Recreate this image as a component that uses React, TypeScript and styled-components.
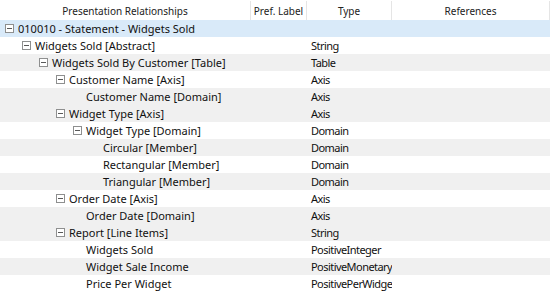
import React, { VFC } from 'react';
import styled, { createGlobalStyle } from 'styled-components';

type Row = {
  label: string,
  level: number,
  type: string,
  expandable: boolean,
  tone: 'selected' | 'white' | 'grey',
};

const rows: Row[] = [
  { label: '010010 - Statement - Widgets Sold', level: 0, type: '', expandable: true, tone: 'selected' },
  { label: 'Widgets Sold [Abstract]', level: 1, type: 'String', expandable: true, tone: 'white' },
  { label: 'Widgets Sold By Customer [Table]', level: 2, type: 'Table', expandable: true, tone: 'grey' },
  { label: 'Customer Name [Axis]', level: 3, type: 'Axis', expandable: true, tone: 'white' },
  { label: 'Customer Name [Domain]', level: 4, type: 'Axis', expandable: false, tone: 'grey' },
  { label: 'Widget Type [Axis]', level: 3, type: 'Axis', expandable: true, tone: 'grey' },
  { label: 'Widget Type [Domain]', level: 4, type: 'Domain', expandable: true, tone: 'white' },
  { label: 'Circular [Member]', level: 5, type: 'Domain', expandable: false, tone: 'grey' },
  { label: 'Rectangular [Member]', level: 5, type: 'Domain', expandable: false, tone: 'white' },
  { label: 'Triangular [Member]', level: 5, type: 'Domain', expandable: false, tone: 'grey' },
  { label: 'Order Date [Axis]', level: 3, type: 'Axis', expandable: true, tone: 'white' },
  { label: 'Order Date [Domain]', level: 4, type: 'Axis', expandable: false, tone: 'grey' },
  { label: 'Report [Line Items]', level: 3, type: 'String', expandable: true, tone: 'grey' },
  { label: 'Widgets Sold', level: 4, type: 'PositiveInteger', expandable: false, tone: 'white' },
  { label: 'Widget Sale Income', level: 4, type: 'PositiveMonetary', expandable: false, tone: 'grey' },
  { label: 'Price Per Widget', level: 4, type: 'PositivePerWidget', expandable: false, tone: 'white' },
];

const tones = {
  selected: '#d9eaf9',
  white: '#ffffff',
  grey: '#f0f0f0',
};

const GlobalStyle = createGlobalStyle`
  html, body {
    margin: 0;
    padding: 0;
    background: #ffffff;
  }
  body {
    font-family: "Noto Sans", "Open Sans", sans-serif;
    font-size: 11px;
    color: #111111;
  }
`

const Tree = styled.div`
  width: 552px;
  height: 291px;
  overflow: hidden;
`

const columns = '251px 56px 85px 158px';

const Header = styled.div`
  display: grid;
  grid-template-columns: ${columns};
  height: 20px;
  background: #ffffff;
  font-size: 10px;
`

const HeadCell = styled.div`
  display: flex;
  align-items: center;
  justify-content: center;
  border-right: 1px solid #e5e5e5;
  margin-top: 1px;
  color: #222222;
  white-space: nowrap;
  overflow: hidden;
`

const Line = styled.div<{ $tone: Row['tone'] }>`
  display: grid;
  grid-template-columns: ${columns};
  height: 17px;
  width: 550px;
  background: ${(p) => tones[p.$tone]};
`

const NameCell = styled.div<{ $level: number }>`
  display: flex;
  align-items: center;
  padding-left: ${(p) => 5 + p.$level * 17}px;
  white-space: nowrap;
  overflow: hidden;
`

const TypeCell = styled.div`
  display: flex;
  align-items: center;
  padding-left: 4px;
  letter-spacing: -0.55px;
  white-space: nowrap;
  overflow: hidden;
`

const Toggle = styled.span<{ $hidden: boolean }>`
  flex: none;
  display: block;
  width: 9px;
  height: 9px;
  margin-right: 4px;
  visibility: ${(p) => (p.$hidden ? 'hidden' : 'visible')};

  svg {
    display: block;
  }
`

const Minus: VFC<{ hidden: boolean }> = ({ hidden }) => (
  <Toggle $hidden={hidden}>
    <svg width="9" height="9" viewBox="0 0 9 9">
      <rect x="0.5" y="0.5" width="8" height="8" fill="#ffffff" stroke="#8e8f8f" />
      <path d="M2 4.5h5" stroke="#595959" />
    </svg>
  </Toggle>
);

const App: VFC = () => (
  <Tree>
    <GlobalStyle />
    <Header>
      <HeadCell>Presentation Relationships</HeadCell>
      <HeadCell>Pref. Label</HeadCell>
      <HeadCell>Type</HeadCell>
      <HeadCell>References</HeadCell>
    </Header>
    {rows.map((row) => (
      <Line key={row.label} $tone={row.tone}>
        <NameCell $level={row.level}>
          <Minus hidden={!row.expandable} />
          {row.label}
        </NameCell>
        <div />
        <TypeCell>{row.type}</TypeCell>
        <div />
      </Line>
    ))}
  </Tree>
);

export default App;
